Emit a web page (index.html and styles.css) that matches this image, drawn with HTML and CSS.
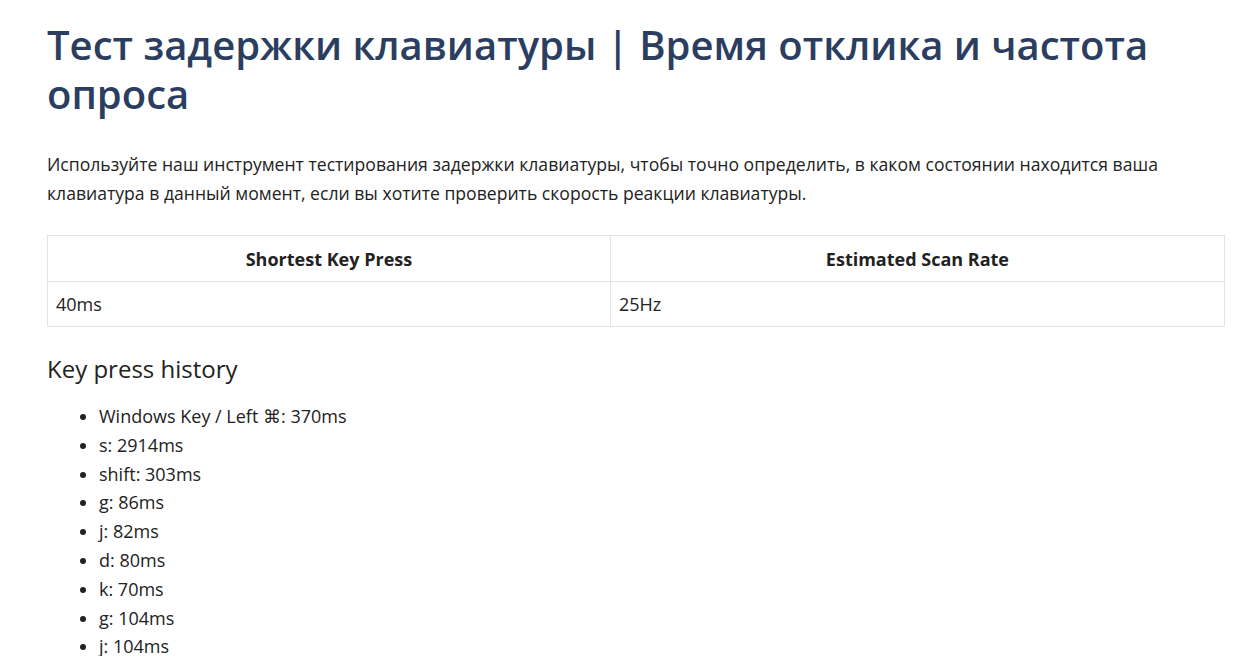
FILE: index.html
```html
<!DOCTYPE html>
<html>
<head>
<meta name="viewport" content="width=device-width, initial-scale=1">
<link rel="stylesheet" href="styles.css">
</head>
<body>
<div class="page">
  <h1 class="title">Тест задержки клавиатуры | Время отклика и частота опроса</h1>
  <p class="intro">Используйте наш инструмент тестирования задержки клавиатуры, чтобы точно определить, в каком состоянии находится ваша клавиатура в данный момент, если вы хотите проверить скорость реакции клавиатуры.</p>

  <table class="stats">
    <tr>
      <th>Shortest Key Press</th>
      <th>Estimated Scan Rate</th>
    </tr>
    <tr>
      <td>40ms</td>
      <td>25Hz</td>
    </tr>
  </table>

  <h3 class="history-title">Key press history</h3>
  <ul class="history">
    <li>Windows Key / Left &#8984;: 370ms</li>
    <li>s: 2914ms</li>
    <li>shift: 303ms</li>
    <li>g: 86ms</li>
    <li>j: 82ms</li>
    <li>d: 80ms</li>
    <li>k: 70ms</li>
    <li>g: 104ms</li>
    <li>j: 104ms</li>
  </ul>
</div>
</body>
</html>
```

FILE: styles.css
```css
body {
  margin: 0;
  font-family: "Open Sans", "DejaVu Sans", sans-serif;
  color: #222;
  background: #fff;
}
.page {
  padding: 20px 35px 0 47px;
}
.title {
  margin: 0 0 32px;
  font-size: 40px;
  line-height: 49px;
  font-weight: 600;
  color: #2c3e5f;
}
.intro {
  margin: 0 0 27px;
  font-size: 17.6px;
  line-height: 29px;
}
.stats {
  width: 100%;
  border-collapse: collapse;
  font-size: 18px;
  margin-bottom: 25px;
}
.stats th,
.stats td {
  border: 1px solid #e3e3e3;
  padding: 8px 8px;
  line-height: 28px;
}
.stats th {
  padding-top: 9px;
  font-weight: 700;
  text-align: center;
}
.stats td {
  text-align: left;
}
.history-title {
  margin: 0 0 16px;
  font-size: 24px;
  line-height: 34px;
  font-weight: 400;
}
.history {
  margin: 0;
  padding-left: 52px;
  font-size: 18px;
  line-height: 28.8px;
}
```
